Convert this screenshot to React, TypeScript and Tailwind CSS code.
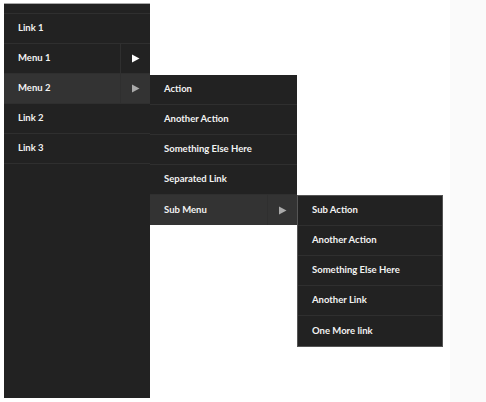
import { useState } from 'react';

const font = { fontFamily: 'Lato, "Liberation Sans", sans-serif' };

function Row({ label, arrow, active, last }: { label: string; arrow?: boolean; active?: boolean; last?: boolean }) {
  return (
    <div className={`flex h-[30px] items-stretch ${last ? '' : 'border-b border-[#2f2f2f]'} ${active ? 'bg-[#333333]' : ''}`}>
      <div className="flex flex-1 items-center pl-[14px] text-[9.5px] font-bold text-[#f2f2f2]">{label}</div>
      {arrow && (
        <div className={`flex w-[30px] items-center justify-center border-l border-[#2f2f2f] ${active ? 'text-[#aaaaaa]' : 'text-white'}`}>
          <svg width="9" height="9" viewBox="0 0 9 9"><path d="M1 0.5 L8.5 4.5 L1 8.5 Z" fill="currentColor" /></svg>
        </div>
      )}
    </div>
  );
}

export default function App() {
  const [open] = useState(true);
  return (
    <div className="relative flex h-[402px] w-[486px] bg-white" style={font}>
      <div className="ml-[4px] mt-[3px] h-[395px] w-[146px] border-t border-[#aaaaaa] bg-[#222222]">
        <div className="h-[10px] border-b border-[#2f2f2f]" />
        <Row label="Link 1" />
        <Row label="Menu 1" arrow />
        <Row label="Menu 2" arrow active />
        <Row label="Link 2" />
        <Row label="Link 3" />
      </div>
      <div className="flex-1" />
      <div className="w-[36px] bg-[#fafafa]" />

      {open && (
        <div className="absolute left-[150px] top-[75px] w-[147px] bg-[#222222]">
          <Row label="Action" />
          <Row label="Another Action" />
          <Row label="Something Else Here" />
          <Row label="Separated Link" />
          <Row label="Sub Menu" arrow active last />
        </div>
      )}
      {open && (
        <div className="absolute left-[297px] top-[195px] w-[146px] border border-[#555555] bg-[#222222]">
          <Row label="Sub Action" />
          <Row label="Another Action" />
          <Row label="Something Else Here" />
          <Row label="Another Link" />
          <Row label="One More link" last />
        </div>
      )}
    </div>
  );
}
